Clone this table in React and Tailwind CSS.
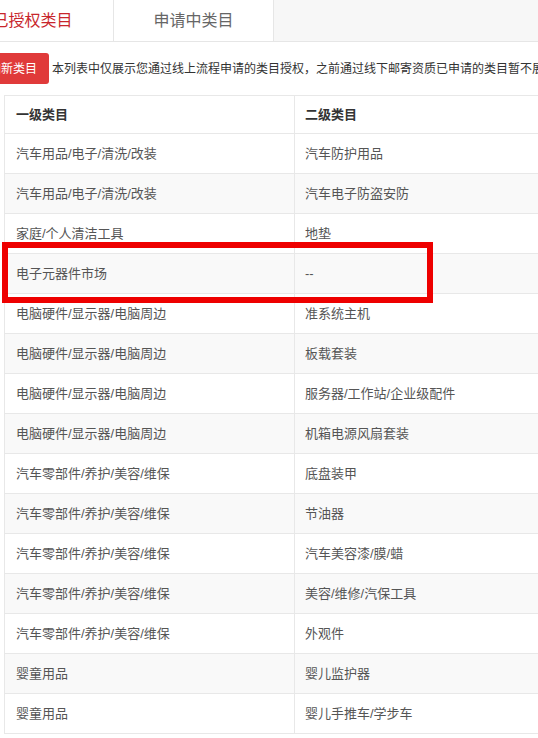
import React from 'react';

const rows = [
    ['汽车用品/电子/清洗/改装', '汽车防护用品'],
    ['汽车用品/电子/清洗/改装', '汽车电子防盗安防'],
    ['家庭/个人清洁工具', '地垫'],
    ['电子元器件市场', '--'],
    ['电脑硬件/显示器/电脑周边', '准系统主机'],
    ['电脑硬件/显示器/电脑周边', '板载套装'],
    ['电脑硬件/显示器/电脑周边', '服务器/工作站/企业级配件'],
    ['电脑硬件/显示器/电脑周边', '机箱电源风扇套装'],
    ['汽车零部件/养护/美容/维保', '底盘装甲'],
    ['汽车零部件/养护/美容/维保', '节油器'],
    ['汽车零部件/养护/美容/维保', '汽车美容漆/膜/蜡'],
    ['汽车零部件/养护/美容/维保', '美容/维修/汽保工具'],
    ['汽车零部件/养护/美容/维保', '外观件'],
    ['婴童用品', '婴儿监护器'],
    ['婴童用品', '婴儿手推车/学步车'],
];

export default function App() {
    return (
        <div className="relative w-[538px] h-[738px] overflow-hidden bg-white font-['Liberation_Sans','Noto_Sans_CJK_SC',sans-serif]">
            {/* tabs */}
            <div className="flex h-[42px] bg-[#f7f7f7] border-b border-[#e6e6e6]">
                <div className="-ml-[48px] w-[161px] shrink-0 flex items-center justify-center bg-white text-[16px] text-[#c8262c]">已授权类目</div>
                <div className="w-[161px] shrink-0 flex items-center justify-center bg-white border-l border-r border-[#e6e6e6] text-[16px] text-[#666]">申请中类目</div>
            </div>

            {/* notice */}
            <div className="flex items-center mt-[11px] h-[31px] whitespace-nowrap">
                <button className="-ml-[35px] h-[31px] px-3 rounded-[3px] bg-[#e03a3a] text-white text-[12px] shrink-0">添加新类目</button>
                <span className="ml-[3px] text-[12px] text-[#333]">本列表中仅展示您通过线上流程申请的类目授权，之前通过线下邮寄资质已申请的类目暂不展示</span>
            </div>

            {/* table */}
            <div className="mt-[11px] ml-[4px] w-[600px] border-l border-t border-[#e8e8e8]">
                <div className="flex h-[38px] border-b border-[#e8e8e8] text-[13px] font-bold text-[#333]">
                    <div className="w-[290px] shrink-0 flex items-center pl-[11px] border-r border-[#e8e8e8]">一级类目</div>
                    <div className="flex-1 flex items-center pl-[10px]">二级类目</div>
                </div>
                {rows.map((r, i) => (
                    <div key={i} className={`flex h-[40px] border-b border-[#e8e8e8] text-[13px] text-[#555] ${i % 2 === 1 ? 'bg-[#f9f9f9]' : 'bg-white'}`}>
                        <div className="w-[290px] shrink-0 flex items-center pl-[11px] border-r border-[#e8e8e8]">{r[0]}</div>
                        <div className="flex-1 flex items-center pl-[10px]">{r[1]}</div>
                    </div>
                ))}
            </div>

            {/* annotation box */}
            <div className="absolute left-[2px] top-[242px] w-[431px] h-[61px] border-[6px] border-[#ee0000]" />
        </div>
    );
}
